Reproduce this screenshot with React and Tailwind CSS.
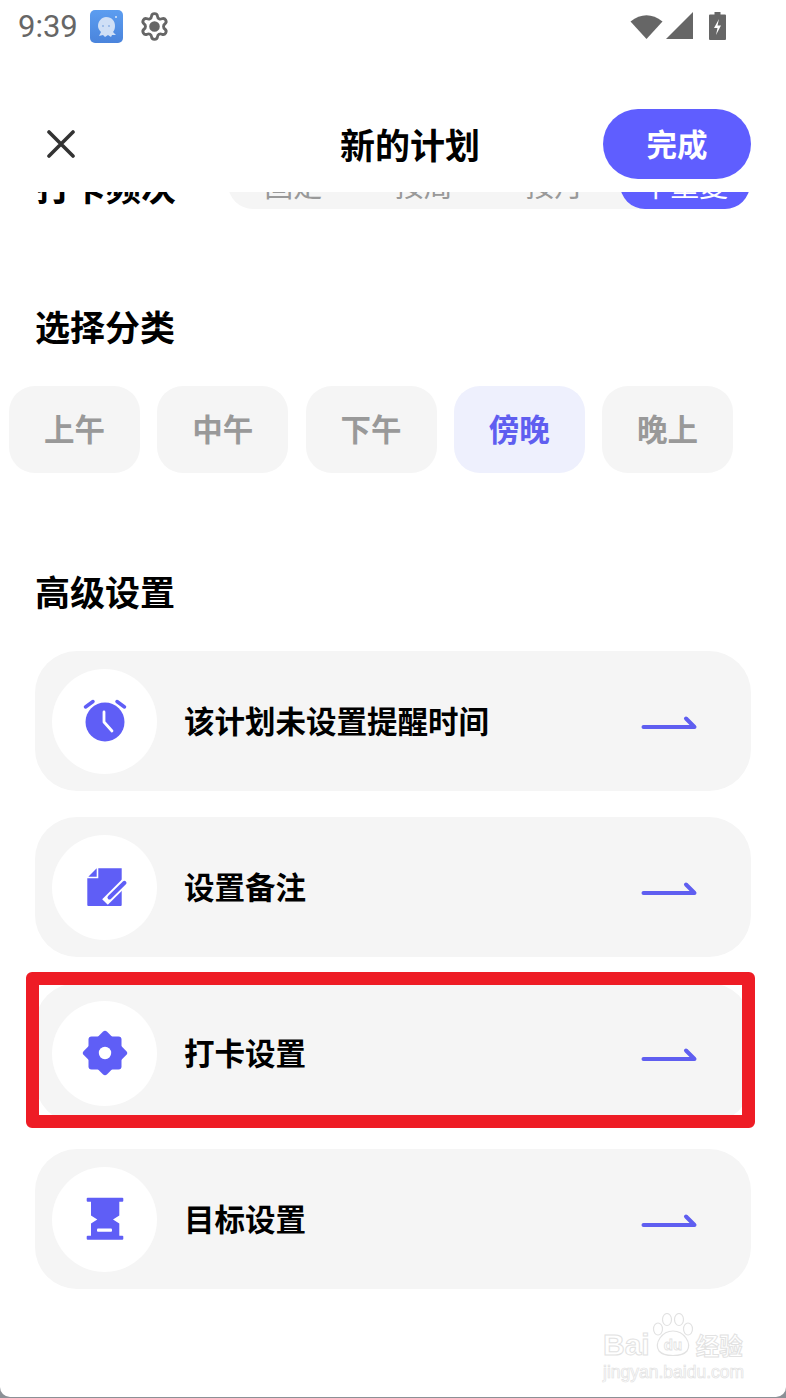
import { Settings } from "lucide-react";

const CJK = "font-['Noto_Sans_CJK_SC','Noto_Sans',sans-serif]";

const CATEGORIES = [
  { label: "上午" },
  { label: "中午" },
  { label: "下午" },
  { label: "傍晚", active: true },
  { label: "晚上" },
];

const FREQUENCIES = [
  { label: "固定" },
  { label: "按周" },
  { label: "按月" },
  { label: "不重复", active: true },
];

// --- Icons ---
const AlarmIcon = () => (
  <svg width="48" height="48" viewBox="0 0 48 48">
    <circle cx="24" cy="25" r="19.5" fill="#5f5ef6" />
    <path d="M4.5 10 12 4.5M36 4.5 43.5 10" stroke="#5f5ef6" strokeWidth="3.5" strokeLinecap="round" fill="none" />
    <path d="M23 15v10l8 9" stroke="#fff" strokeWidth="2.8" strokeLinecap="round" strokeLinejoin="round" fill="none" />
  </svg>
);

const NoteIcon = () => (
  <svg width="48" height="48" viewBox="0 0 48 48">
    <path d="M17.3 5.3V15.3H6.3V42a1 1 0 0 0 1 1H39.700a1 1 0 0 0 1-1V5.300Z" fill="#5f5ef6" />
    <path d="M7.3 13.700 15.700 5.300V13.700Z" fill="#5f5ef6" />
    <path d="M24 39 46 17" stroke="#fff" strokeWidth="8" strokeLinecap="butt" fill="none" />
    <path d="M28.500 34.500 43.500 19.800" stroke="#5f5ef6" strokeWidth="4" strokeLinecap="round" fill="none" />
  </svg>
);

const GearIcon = () => (
  <svg width="48" height="48" viewBox="0 0 48 48">
    <rect x="7.5" y="7.5" width="33" height="33" rx="3" fill="#5f5ef6" />
    <rect x="7.5" y="7.5" width="33" height="33" rx="3" fill="#5f5ef6" transform="rotate(45 24 24)" />
    <circle cx="24" cy="24" r="6.2" fill="#fff" />
  </svg>
);

const HourglassIcon = () => (
  <svg width="48" height="48" viewBox="0 0 48 48">
    <rect x="5.700" y="2.700" width="36.600" height="4" rx="1" fill="#5f5ef6" />
    <rect x="5.700" y="40.700" width="36.600" height="4" rx="1" fill="#5f5ef6" />
    <path d="M10 6V20.500L16.300 24.500 10 28.500V41H38.300V28.500L32 24.500 38.300 20.500V6Z" fill="#5f5ef6" />
    <rect x="16" y="33.500" width="15" height="3.200" rx="1" fill="#fff" />
  </svg>
);

const ArrowIcon = () => (
  <svg width="56" height="24" viewBox="0 0 56 24">
    <path d="M2.500 18H53.500L45 9.500" stroke="#5f5ef0" strokeWidth="4" strokeLinecap="round" strokeLinejoin="round" fill="none" />
  </svg>
);

const StatusBar = () => (
  <div className="h-[52px] flex items-center pl-[18px] pr-[60px] text-[#666]">
    <span className="text-[31px] leading-none font-['Roboto',sans-serif]">9:39</span>
    <div className="relative ml-[12px] w-[33px] h-[33px] rounded-[5px] bg-gradient-to-b from-[#5c9df0] to-[#4a84dc] flex items-center justify-center">
      <svg width="27" height="27" viewBox="0 0 27 27">
        <path d="M13 4c6 0 9 4 9 9 0 3-1 5-2 6l3 3-4 0-1 2-3-2-3 2-2-2-4 1 2-4c-2-2-3-4-3-6 0-5 4-9 8-9Z" fill="#cfdff6" />
        <circle cx="10" cy="13" r="1" fill="#8fb3e6" />
        <circle cx="16" cy="13" r="1" fill="#8fb3e6" />
        <circle cx="23" cy="4" r="1" fill="#dbe8fa" />
      </svg>
    </div>
    <Settings className="ml-[16px] w-[31px] h-[31px] [&>circle]:fill-[#666]" strokeWidth={2.2} />
    <div className="ml-auto flex items-center">
      <svg width="33" height="28" viewBox="0 0 33 28">
        <path d="M0.500 9.500Q16.500 -3 32.500 9.500L16.500 27Z" fill="#666" />
      </svg>
      <svg className="ml-[3px]" width="27" height="28" viewBox="0 0 27 28">
        <path d="M27 0V27H0Z" fill="#666" />
      </svg>
      <svg className="ml-[16px]" width="17" height="28" viewBox="0 0 17 28">
        <path d="M5.500 0h6v2.500H16a1 1 0 0 1 1 1V27a1 1 0 0 1-1 1H1a1 1 0 0 1-1-1V3.500a1 1 0 0 1 1-1h4.500Z" fill="#666" />
        <path d="M10 7 5 16h3.500L7 23l5-9.500H8.500Z" fill="#fff" />
      </svg>
    </div>
  </div>
);

const Header = () => (
  <header className="h-[140px] relative flex items-center justify-center">
    <svg className="absolute left-[47px] top-[78px]" width="28" height="28" viewBox="0 0 28 28">
      <path d="M2 2 26 26M26 2 2 26" stroke="#333" strokeWidth="3.6" strokeLinecap="round" fill="none" />
    </svg>
    <h1 className="mt-[42px] ml-[34px] text-[35px] leading-none font-bold text-black">新的计划</h1>
    <button className="absolute left-[603px] top-[57px] w-[148px] h-[70px] rounded-full bg-[#5f5eff] text-white text-[30.500px] font-bold leading-none pb-[2px]">
      完成
    </button>
  </header>
);

// only the bottom edge of this row shows under the header
const FrequencyRow = () => (
  <div className="h-[17px] overflow-hidden flex items-end pl-[36px] pr-[36px]">
    <div className="w-[192px] text-[35px] leading-none font-bold text-black shrink-0 -translate-y-[6px]">打卡频次</div>
    <div className="flex h-[50px] w-[522px] rounded-[25px] bg-[#f5f5f5] shrink-0">
      {FREQUENCIES.map((f) => (
        <div
          key={f.label}
          className={`flex-1 flex items-center justify-center text-[29px] leading-none rounded-[25px] ${f.active ? "bg-[#5f5eff] text-white" : "text-[#999]"}`}
        >
          {f.label}
        </div>
      ))}
    </div>
  </div>
);

const CategoryChips = () => (
  <div className="flex gap-[17.250px] pl-[9px] mt-[42px]">
    {CATEGORIES.map((c) => (
      <div
        key={c.label}
        className={`w-[131px] h-[87px] rounded-[26px] flex items-center justify-center text-[30.500px] font-bold leading-none pb-[3px] ${c.active ? "bg-[#eef0fd] text-[#5f5ef0]" : "bg-[#f5f5f5] text-[#999]"}`}
      >
        {c.label}
      </div>
    ))}
  </div>
);

const SettingRow = ({ icon, label, highlight }) => (
  <div className="relative h-[140px] rounded-[42px] bg-[#f5f5f5] flex items-center pl-[17px] pr-[54px]">
    <div className="w-[105px] h-[105px] rounded-full bg-white flex items-center justify-center shrink-0">{icon}</div>
    <span className="ml-[27px] mb-[2px] text-[30.500px] font-bold leading-none text-black">{label}</span>
    <div className="ml-auto"><ArrowIcon /></div>
    {highlight && (
      <div className="absolute left-[-9px] right-[-4px] top-[-11px] bottom-[-5px] border-[13px] border-[#ee1c25] rounded-[6px]" />
    )}
  </div>
);

const Watermark = () => (
  <div className="absolute left-[603px] top-[1313px] w-[142px] font-['Liberation_Sans',sans-serif] whitespace-nowrap">
    <div className="flex items-end h-[44px]">
      <span className="text-[30px] leading-[24px] font-bold text-transparent [-webkit-text-stroke:1px_#e2e2e2]">Bai</span>
      <svg className="ml-[2px]" width="42" height="44" viewBox="0 0 42 44">
        <g fill="none" stroke="#e2e2e2" strokeWidth="1.200">
          <ellipse cx="6" cy="16" rx="4.500" ry="6" />
          <ellipse cx="15" cy="6.500" rx="4.500" ry="6" />
          <ellipse cx="27" cy="6.500" rx="4.500" ry="6" />
          <ellipse cx="36" cy="16" rx="4.500" ry="6" />
          <path d="M21 18C32 18 40 30 35 38C30 44 12 44 7 38C2 30 10 18 21 18Z" />
        </g>
        <text x="21" y="37" textAnchor="middle" fontSize="15" fontWeight="700" fill="none" stroke="#e2e2e2" strokeWidth="0.800">du</text>
      </svg>
      <span className={`ml-[2px] text-[23.500px] leading-[24px] font-bold text-transparent [-webkit-text-stroke:1px_#e2e2e2] ${CJK}`}>经验</span>
    </div>
    <div className="text-[17.500px] leading-none mt-[7px] text-transparent [-webkit-text-stroke:0.7px_#e2e2e2]">jingyan.baidu.com</div>
  </div>
);

export default function App() {
  return (
    <div className="h-[1398px] w-[786px] bg-[#8b9096] overflow-hidden">
      <div className={`relative w-[786px] h-[1397px] overflow-hidden bg-white rounded-b-[10px] ${CJK}`}>
        <StatusBar />
        <Header />
        <FrequencyRow />

        <h2 className="mt-[99px] ml-[35px] text-[35px] font-bold leading-[36px] text-black">选择分类</h2>
        <CategoryChips />

        <h2 className="mt-[100px] ml-[35px] text-[35px] font-bold leading-[36px] text-black">高级设置</h2>

        <div className="mt-[42px] ml-[35px] w-[716px] flex flex-col gap-[26px]">
          <SettingRow icon={<AlarmIcon />} label="该计划未设置提醒时间" />
          <SettingRow icon={<NoteIcon />} label="设置备注" />
          <SettingRow icon={<GearIcon />} label="打卡设置" highlight />
          <SettingRow icon={<HourglassIcon />} label="目标设置" />
        </div>

        <Watermark />
      </div>
    </div>
  );
}
